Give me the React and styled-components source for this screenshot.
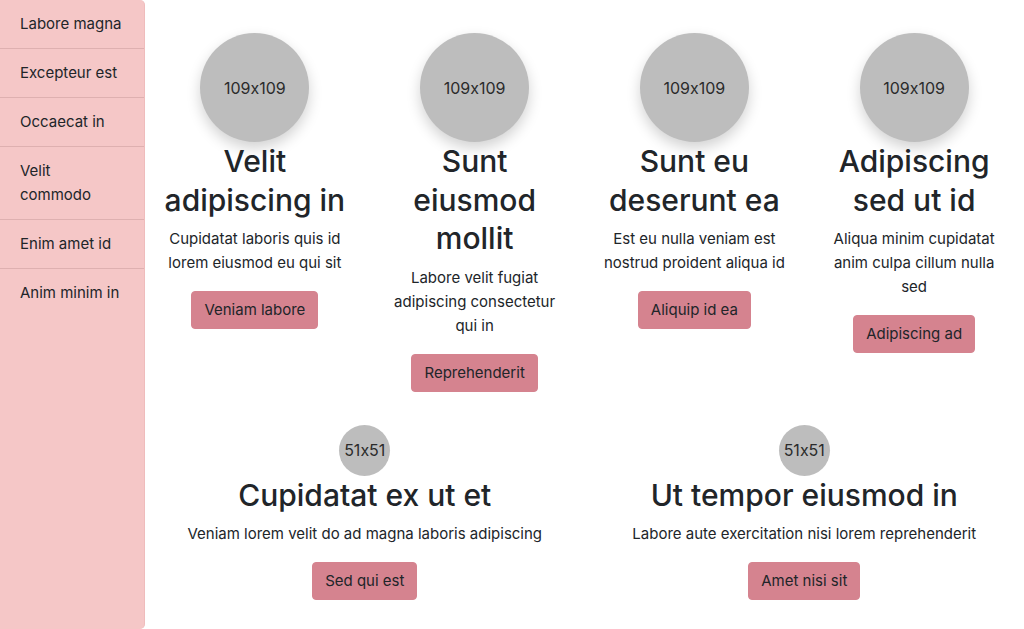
import React from 'react';
import styled, { createGlobalStyle } from 'styled-components';

const GlobalStyle = createGlobalStyle`
  * { box-sizing: border-box; }
  body {
    margin: 0;
    font-family: Inter, "Noto Sans", "Liberation Sans", sans-serif;
    font-feature-settings: "calt" 0;
    font-size: 16px;
    line-height: 1.5;
    color: #212529;
    background: #fff;
  }
`;

const Layout = styled.div`
  display: flex;
  min-height: 100vh;
`;

const Sidebar = styled.nav`
  width: 145px;
  flex-shrink: 0;
  background: #f5c7c7;
  border-right: 1px solid #efbcbc;
  border-radius: 0 5px 5px 0;
`;

const NavItem = styled.a`
  display: block;
  padding: 12px 20px;
  border-bottom: 1px solid #deb0b0;
  color: #212529;
  text-decoration: none;
  font-size: 15px;
  line-height: 24px;

  &:last-child {
    border-bottom: none;
  }
`;

const Main = styled.main`
  flex: 1;
  padding: 33px 0 20px;
  display: flex;
  flex-direction: column;
  gap: 33px;
`;

const Row = styled.div`
  display: grid;
  grid-template-columns: repeat(${p => p.$cols}, 1fr);
  align-items: start;
`;

const Card = styled.div`
  display: flex;
  flex-direction: column;
  align-items: center;
  text-align: center;
  padding: 0 18px;
`;

const Avatar = styled.div`
  width: ${p => p.$size}px;
  height: ${p => p.$size}px;
  border-radius: 50%;
  background: #bdbdbd;
  color: #2b2b2b;
  font-size: 16px;
  display: flex;
  align-items: center;
  justify-content: center;
  box-shadow: ${p => (p.$shadow ? '0 6px 14px rgba(0,0,0,0.18)' : 'none')};
`;

const Title = styled.h2`
  margin: 0 0 8px;
  font-size: 30px;
  font-weight: 500;
  line-height: 38.5px;
`;

const Text = styled.p`
  margin: 0 0 16px;
  font-size: 15px;
  line-height: 24px;
`;

const Button = styled.button`
  font-family: inherit;
  font-size: 15px;
  line-height: 24px;
  padding: 6px 12px;
  border: 1px solid #d5838f;
  border-radius: 4px;
  background: #d5838f;
  color: #212529;
`;

const nav = ['Labore magna', 'Excepteur est', 'Occaecat in', 'Velit commodo', 'Enim amet id', 'Anim minim in'];

const top = [
  { title: 'Velit adipiscing in', text: 'Cupidatat laboris quis id lorem eiusmod eu qui sit', btn: 'Veniam labore' },
  { title: 'Sunt eiusmod mollit', text: 'Labore velit fugiat adipiscing consectetur qui in', btn: 'Reprehenderit' },
  { title: 'Sunt eu deserunt ea', text: 'Est eu nulla veniam est nostrud proident aliqua id', btn: 'Aliquip id ea' },
  { title: 'Adipiscing sed ut id', text: 'Aliqua minim cupidatat anim culpa cillum nulla sed', btn: 'Adipiscing ad' },
];

const bottom = [
  { title: 'Cupidatat ex ut et', text: 'Veniam lorem velit do ad magna laboris adipiscing', btn: 'Sed qui est' },
  { title: 'Ut tempor eiusmod in', text: 'Labore aute exercitation nisi lorem reprehenderit', btn: 'Amet nisi sit' },
];

const Feature = ({ size, shadow, item }) => (
  <Card>
    <Avatar $size={size} $shadow={shadow}>{size}x{size}</Avatar>
    <Title>{item.title}</Title>
    <Text>{item.text}</Text>
    <Button>{item.btn}</Button>
  </Card>
);

export default function App() {
  return (
    <>
      <GlobalStyle />
      <Layout>
        <Sidebar>
          {nav.map(n => (
            <NavItem key={n} href="#">{n}</NavItem>
          ))}
        </Sidebar>
        <Main>
          <Row $cols={4}>
            {top.map(it => (
              <Feature key={it.title} size={109} shadow item={it} />
            ))}
          </Row>
          <Row $cols={2}>
            {bottom.map(it => (
              <Feature key={it.title} size={51} item={it} />
            ))}
          </Row>
        </Main>
      </Layout>
    </>
  );
}
